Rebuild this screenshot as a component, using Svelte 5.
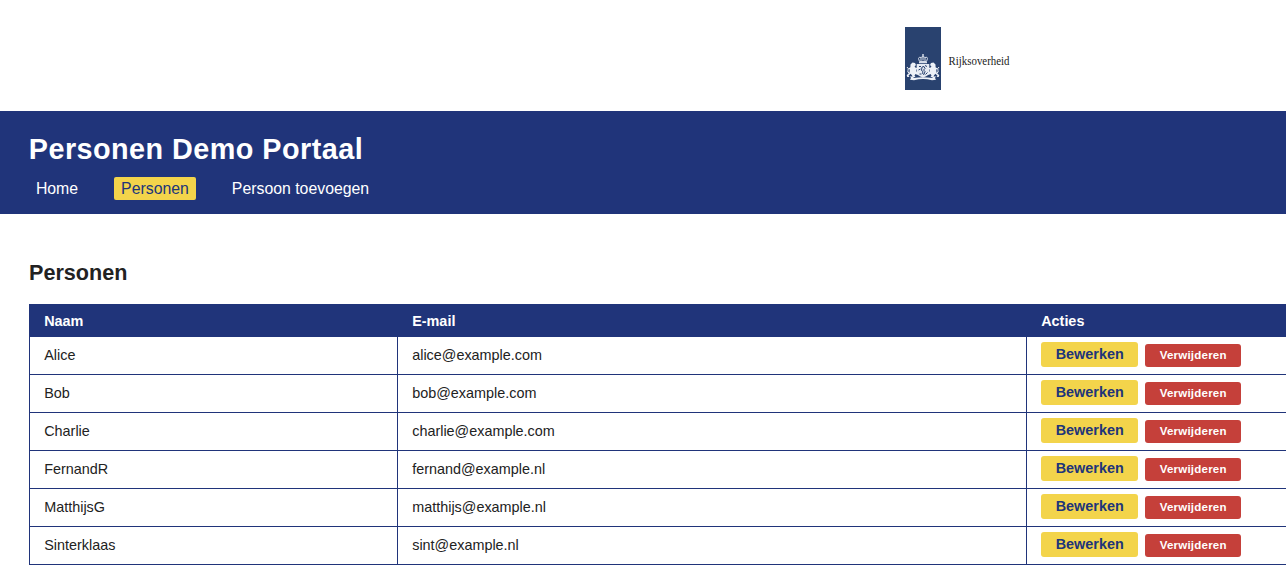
<script>
  const nav = [
    { label: 'Home', active: false },
    { label: 'Personen', active: true },
    { label: 'Persoon toevoegen', active: false }
  ];

  const people = [
    { name: 'Alice', email: 'alice@example.com' },
    { name: 'Bob', email: 'bob@example.com' },
    { name: 'Charlie', email: 'charlie@example.com' },
    { name: 'FernandR', email: 'fernand@example.nl' },
    { name: 'MatthijsG', email: 'matthijs@example.nl' },
    { name: 'Sinterklaas', email: 'sint@example.nl' }
  ];
</script>

{#snippet lion()}
  <path d="M5.500 37.500l2-2 2.500.5 1 2-1.500 1.500 1.500 1.500 2-.8.3 1.600-2.300 1 .5 2 2 1.700-1 1.500-2-1-1 1.500 1 1.500-3 .3-.5-2-1.500-1.500-2 2 1 1.200H2.300l-.6-1.800 2.800-2.700.3-3-1.800-.7 2.400-1.500z" />
  <path d="M4.500 46Q2 45.500 3 43.500Q4 41.500 2 40" fill="none" stroke="#edf1f7" />
{/snippet}

<div class="page">
  <div class="brand">
    <svg class="logo" width="112" height="63" viewBox="0 0 112 63" role="img" aria-label="Rijksoverheid">
      <rect width="36" height="63" fill="#29426f" />
      <!-- crown -->
      <g fill="none" stroke="#d5dce8">
        <path d="M14.500 34.500L13.500 31.500Q14 29.500 16 30.500Q18 28.500 20 30.500Q22.500 29.500 22.500 31.500L21.500 34.500ZM16 31v3M18 29.500v4M20 31v3M18 27v3M17 28h2" />
        <path d="M14 35.600h8" stroke-width="1.300" />
      </g>
      <!-- shield -->
      <path d="M11.700 37h12.600v7.500q0 4.500-6.300 6q-6.300-1.500-6.300-6z" fill="#e6ebf3" />
      <path d="M14 39.500h2M20 38.500l2 1M13.500 43l2-1M20.500 47.500l2-2M14.500 47h2M17 40l2-.5 1 2-1.500 1.500 1.500 1.500-1 3-1.500-1 .5-2-1.500-1z" stroke="#29426f" fill="none" />
      <!-- supporting lions -->
      <g fill="#edf1f7">{@render lion()}</g>
      <g fill="#edf1f7" transform="translate(36 0) scale(-1 1)">{@render lion()}</g>
      <!-- motto ribbon -->
      <path d="M5 49.200l3.500.6v1.200q9.500-1.700 19 0v-1.200l3.500-.6-1 1.800 1 1.700-4 .5q-9-2.300-18 0l-4-.5 1-1.700z" fill="#edf1f7" />
      <text x="43.500" y="38" textLength="61" lengthAdjust="spacingAndGlyphs">Rijksoverheid</text>
    </svg>
  </div>

  <header>
    <h1>Personen Demo Portaal</h1>
    <nav>
      {#each nav as item}
        <a class:active={item.active} href="#top">{item.label}</a>
      {/each}
    </nav>
  </header>

  <main>
    <h2>Personen</h2>
    <table>
      <colgroup>
        <col class="name" />
        <col class="email" />
        <col />
      </colgroup>
      <thead>
        <tr><th>Naam</th><th>E-mail</th><th>Acties</th></tr>
      </thead>
      <tbody>
        {#each people as person}
          <tr>
            <td>{person.name}</td>
            <td>{person.email}</td>
            <td>
              <div class="actions">
                <a class="edit" href="#top">Bewerken</a>
                <button>Verwijderen</button>
              </div>
            </td>
          </tr>
        {/each}
      </tbody>
    </table>
  </main>
</div>

<style>
  :global(body) {
    background: #fff;
    overflow: hidden;
  }
  .page {
    height: 572px;
    overflow: hidden;
    color: #222;
    font-family: "Liberation Sans", Arial, sans-serif;
    font-size: 14.4px;
  }
  .brand {
    height: 111px;
    box-sizing: border-box;
    padding: 27px 0 0 905px;
  }
  .logo {
    display: block;
  }
  .logo text {
    font-family: "Liberation Serif", serif;
    font-size: 12px;
    fill: #222;
  }
  header {
    box-sizing: border-box;
    height: 103px;
    padding: 22px 28.8px 0;
    background: #20347a;
    color: #fff;
  }
  h1 {
    margin: 0;
    font-size: 28.8px;
    line-height: 33px;
    letter-spacing: 0.45px;
  }
  nav {
    display: flex;
    gap: 28.8px;
    margin-top: 11px;
  }
  nav a {
    padding: 0 7.1px;
    border-radius: 2px;
    color: #fff;
    font-size: 15.84px;
    line-height: 23px;
    text-decoration: none;
  }
  nav a.active {
    background: #f3d44b;
    color: #20347a;
  }
  main {
    padding: 46px 0 0 29px;
  }
  h2 {
    margin: 0 0 19px;
    font-size: 21.6px;
    line-height: 25px;
  }
  table {
    width: 1400px;
    table-layout: fixed;
    border-collapse: collapse;
  }
  .name {
    width: 368px;
  }
  .email {
    width: 629px;
  }
  th,
  td {
    box-sizing: border-box;
    padding: 0 14.2px;
    border: 1px solid #20347a;
    text-align: left;
  }
  th {
    height: 32px;
    background: #20347a;
    color: #fff;
  }
  td {
    height: 38px;
    padding-bottom: 2px;
  }
  .actions {
    display: flex;
    align-items: flex-end;
    gap: 7px;
    height: 25px;
    margin-top: -1px;
  }
  .edit {
    box-sizing: border-box;
    width: 97px;
    height: 25px;
    border-radius: 3px;
    background: #f3d44b;
    color: #20347a;
    font-weight: bold;
    line-height: 24px;
    text-align: center;
    text-decoration: none;
  }
  button {
    width: 96px;
    height: 23px;
    padding: 0;
    border: 0;
    border-radius: 3px;
    background: #c5403a;
    color: #fff;
    font: bold 11.52px "Liberation Sans", Arial, sans-serif;
    letter-spacing: 0.22px;
  }
</style>
